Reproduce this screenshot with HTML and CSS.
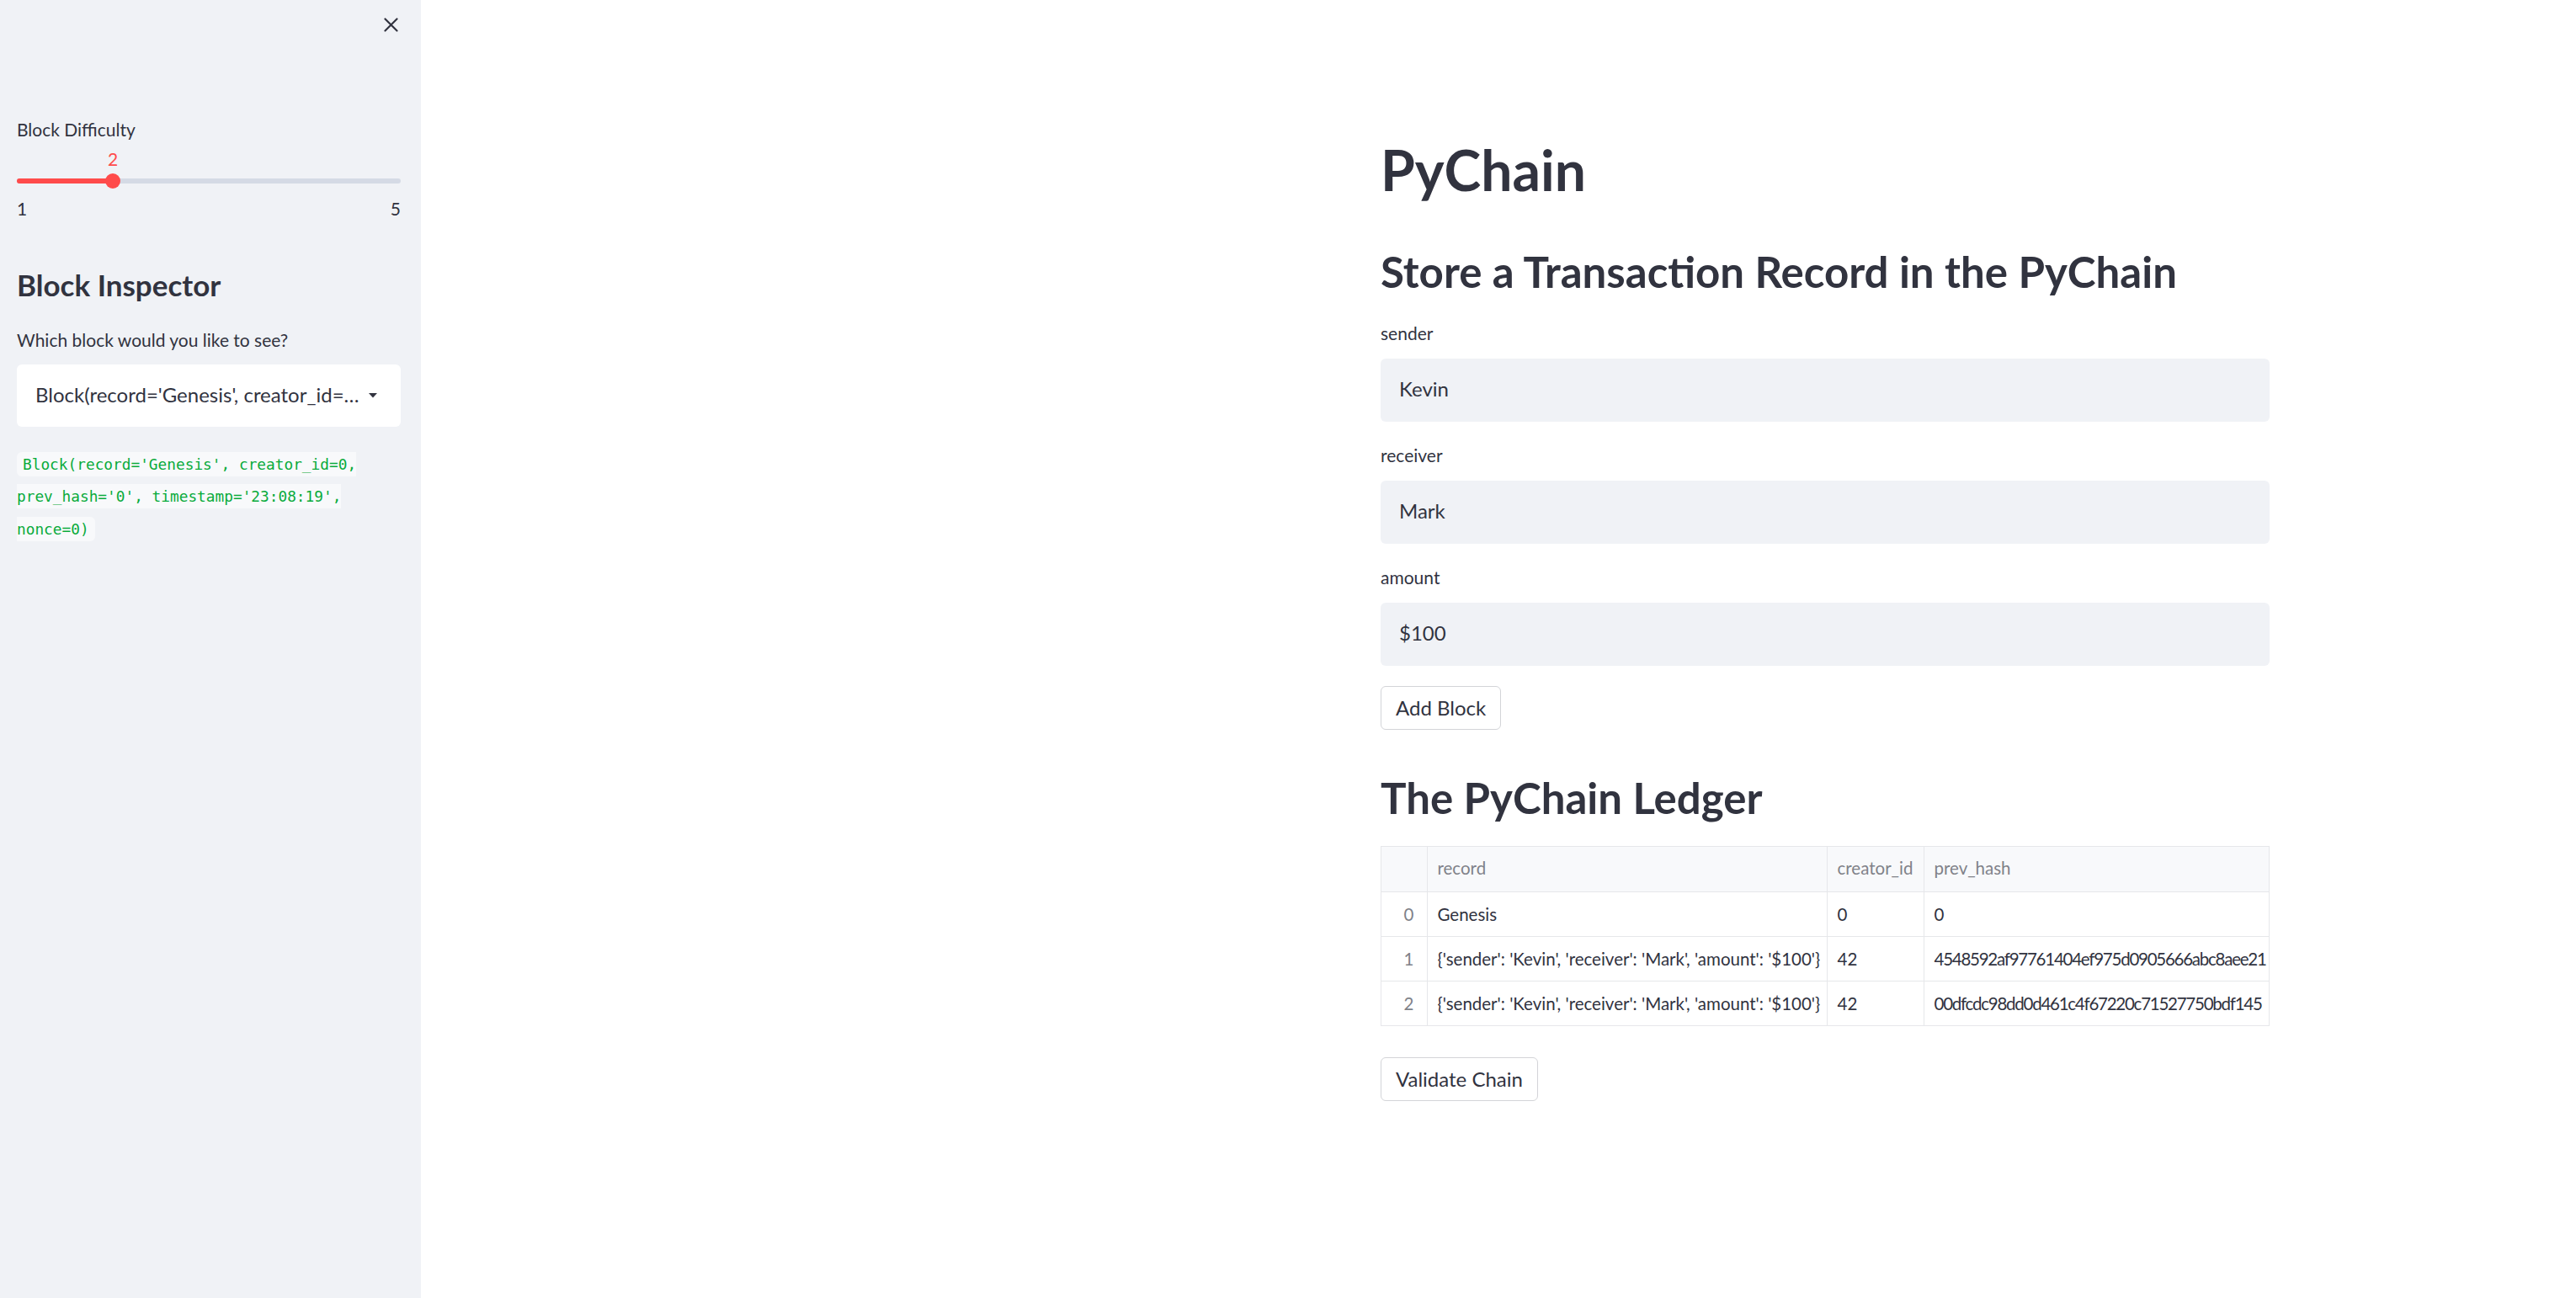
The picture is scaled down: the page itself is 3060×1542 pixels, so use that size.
FILE: index.html
```html
<!DOCTYPE html>
<html lang="en">
<head>
<meta charset="utf-8">
<title>PyChain</title>
<link rel="stylesheet" href="styles.css">
</head>
<body>
<aside class="sidebar">
  <div class="sidebar-top">
    <svg class="close-icon" width="17" height="17" viewBox="0 0 17 17"><path d="M1.5 1.5 L15.5 15.5 M15.5 1.5 L1.5 15.5" stroke="#31333f" stroke-width="2.2" stroke-linecap="round" fill="none"/></svg>
  </div>
  <div class="label side-label">Block Difficulty</div>
  <div class="slider">
    <div class="slider-track"><div class="slider-fill" style="width:25%"></div></div>
    <div class="slider-value" style="left:25%">2</div>
    <div class="slider-thumb" style="left:25%"></div>
    <div class="slider-ticks"><span>1</span><span>5</span></div>
  </div>
  <h2 class="side-heading">Block Inspector</h2>
  <div class="label side-label2">Which block would you like to see?</div>
  <div class="select">
    <span class="select-text">Block(record='Genesis', creator_id=…</span>
    <svg class="caret" width="10" height="6" viewBox="0 0 10 6"><polygon points="0,0 10,0 5,5.5" fill="#31333f"/></svg>
  </div>
  <p class="side-md"><code>Block(record='Genesis', creator_id=0, prev_hash='0', timestamp='23:08:19', nonce=0)</code></p>
</aside>
<main class="main">
  <div class="block">
    <h1 class="title">PyChain</h1>
    <h2 class="heading first">Store a Transaction Record in the PyChain</h2>
    <div class="field">
      <div class="label">sender</div>
      <div class="input">Kevin</div>
    </div>
    <div class="field">
      <div class="label">receiver</div>
      <div class="input">Mark</div>
    </div>
    <div class="field">
      <div class="label">amount</div>
      <div class="input">$100</div>
    </div>
    <button class="btn add">Add Block</button>
    <h2 class="heading ledger">The PyChain Ledger</h2>
    <div class="table-wrap">
      <table class="df">
        <colgroup>
          <col class="c-idx"><col class="c-rec"><col class="c-cre"><col class="c-hash">
        </colgroup>
        <thead>
          <tr><th></th><th>record</th><th>creator_id</th><th>prev_hash</th></tr>
        </thead>
        <tbody>
          <tr><td class="idx">0</td><td>Genesis</td><td>0</td><td class="hash">0</td></tr>
          <tr><td class="idx">1</td><td>{'sender': 'Kevin', 'receiver': 'Mark', 'amount': '$100'}</td><td>42</td><td class="hash">4548592af97761404ef975d0905666abc8aee21</td></tr>
          <tr><td class="idx">2</td><td>{'sender': 'Kevin', 'receiver': 'Mark', 'amount': '$100'}</td><td>42</td><td class="hash">00dfcdc98dd0d461c4f67220c71527750bdf145</td></tr>
        </tbody>
      </table>
    </div>
    <button class="btn validate">Validate Chain</button>
  </div>
</main>
</body>
</html>
```

FILE: styles.css
```css
* { box-sizing: border-box; }
html, body { margin: 0; padding: 0; }
body {
  display: flex;
  min-height: 1542px;
  font-family: "Lato", "Noto Sans", sans-serif;
  color: #31333f;
  background: #ffffff;
}
.sidebar {
  width: 500px;
  flex: 0 0 500px;
  background: #f0f2f6;
  padding: 0 24px 0 20px;
}
.sidebar-top {
  display: flex;
  justify-content: flex-end;
  padding-top: 21px;
  padding-right: 3px;
  height: 139px;
}
.close-icon { display: block; }
.label {
  font-size: 21px;
  line-height: 30px;
  height: 30px;
  color: #31333f;
}
.slider {
  position: relative;
  padding-top: 43px;
}
.slider-track {
  height: 6px;
  border-radius: 3px;
  background: #d5dae5;
  position: relative;
}
.slider-fill {
  height: 6px;
  border-radius: 3px;
  background: #ff4b4b;
}
.slider-thumb {
  position: absolute;
  top: 37px;
  width: 18px;
  height: 18px;
  margin-left: -9px;
  border-radius: 50%;
  background: #ff4b4b;
}
.slider-value {
  position: absolute;
  top: 5px;
  transform: translateX(-50%);
  font-size: 21px;
  line-height: 30px;
  color: #ff4b4b;
}
.slider-ticks {
  display: flex;
  justify-content: space-between;
  margin-top: 15px;
  font-size: 21px;
  line-height: 30px;
}
.side-heading {
  margin: 54px 0 0;
  font-size: 35px;
  line-height: 43px;
  font-weight: 700;
}
.side-label2 { margin-top: 29px; }
.select {
  margin-top: 14px;
  height: 74px;
  background: #ffffff;
  border-radius: 6px;
  display: flex;
  align-items: center;
  justify-content: space-between;
  padding: 0 28px 3px 22px;
}
.select-text {
  font-size: 24px;
  white-space: nowrap;
  overflow: hidden;
}
.caret { display: block; margin-top: 2px; }
.side-md {
  margin: 23px 0 0;
  font-size: 24px;
  line-height: 38.4px;
}
code {
  font-family: "DejaVu Sans Mono", "Liberation Mono", monospace;
  font-size: 17.8px;
  line-height: 18px;
  color: #09ab3b;
  background: #f8f9fb;
  border-radius: 6px;
  padding: 4px 7px 4px 7px;
}
.main {
  flex: 1;
  padding: 162px 0 0 1140px;
}
.block {
  width: 1056px;
}
.title {
  margin: 0;
  font-size: 66px;
  line-height: 79px;
  font-weight: 700;
}
.heading {
  margin: 0;
  font-size: 51px;
  line-height: 61px;
  font-weight: 700;
}
.heading.first { margin-top: 51px; }
.field { margin-top: 25px; }
.heading.first + .field { margin-top: 28px; }
.field .label { margin-bottom: 15px; }
.input {
  height: 75px;
  background: #f0f2f6;
  border-radius: 6px;
  display: flex;
  align-items: center;
  padding: 0 22px 4px;
  font-size: 24px;
}
.btn {
  display: block;
  height: 52px;
  padding: 0 17px 2px;
  background: #ffffff;
  border: 1px solid #d3d4d8;
  border-radius: 6px;
  font-family: inherit;
  font-size: 24px;
  color: #31333f;
}
.btn.add { margin-top: 24px; }
.heading.ledger { margin-top: 50px; }
.table-wrap {
  margin-top: 27px;
  width: 1056px;
  overflow: hidden;
  border: 1px solid #e6e7ea;
}
.df {
  border-collapse: collapse;
  table-layout: fixed;
  width: 1054px;
  font-size: 20.5px;
}
.c-idx { width: 54px; }
.c-rec { width: 475px; }
.c-cre { width: 115px; }
.c-hash { width: 410px; }
.df th, .df td {
  border-right: 1px solid #e6e7ea;
  border-bottom: 1px solid #e6e7ea;
  padding: 0 12px;
  text-align: left;
  white-space: nowrap;
  overflow: hidden;
  font-weight: 400;
}
.df th:last-child, .df td:last-child { border-right: none; }
.df td.hash { letter-spacing: -1.25px; padding-right: 0; }
.df th {
  height: 53px;
  background: #f8f9fb;
  color: #808289;
  padding-bottom: 2px;
}
.df td { height: 53px; color: #31333f; }
.df tbody tr:last-child td { border-bottom: none; }
.df td.idx {
  text-align: right;
  padding-right: 15px;
  color: #808289;
}
.btn.validate { margin-top: 37px; }
```
